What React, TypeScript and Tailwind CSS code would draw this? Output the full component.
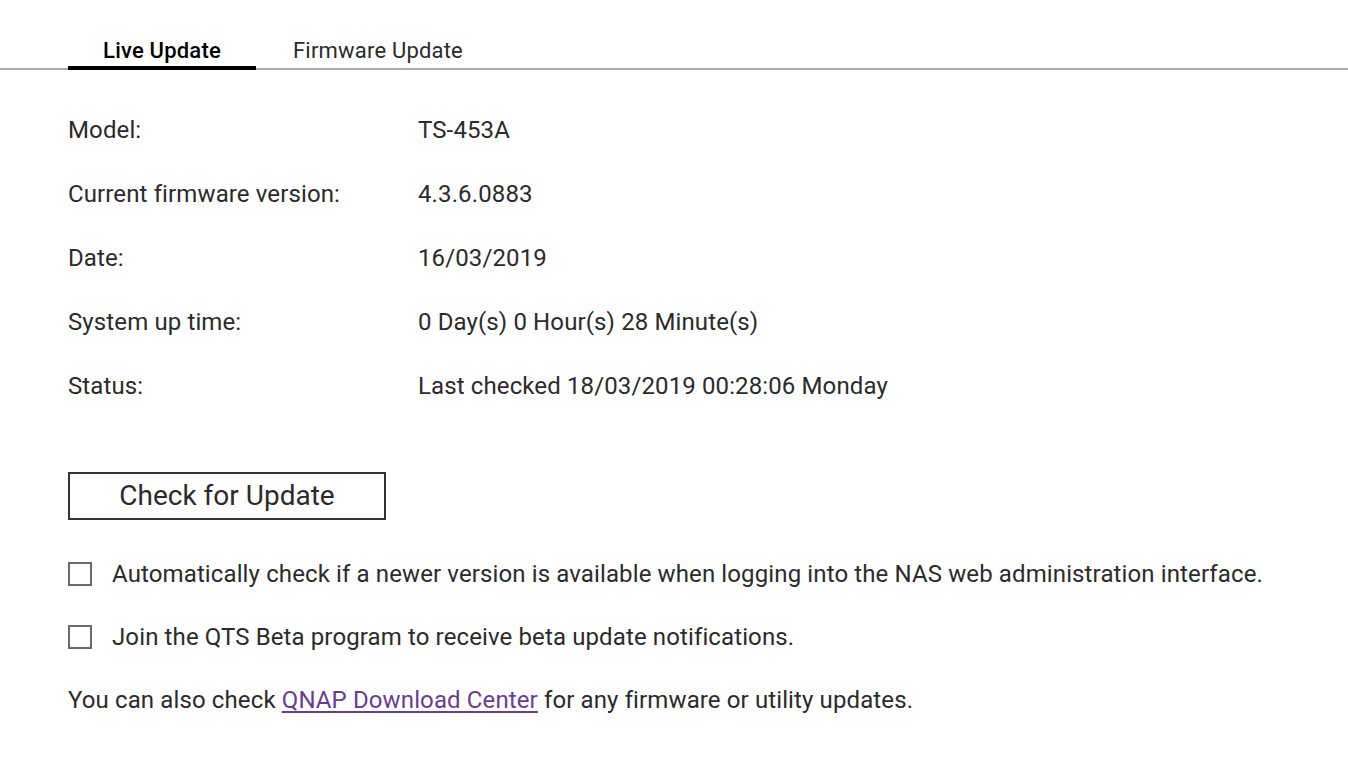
export default function App() {
  const rows: [string, string][] = [
    ['Model:', 'TS-453A'],
    ['Current firmware version:', '4.3.6.0883'],
    ['Date:', '16/03/2019'],
    ['System up time:', '0 Day(s) 0 Hour(s) 28 Minute(s)'],
    ['Status:', 'Last checked 18/03/2019 00:28:06 Monday'],
  ];

  return (
    <div className="w-[1348px] h-[776px] bg-white text-[#2b2b2b] font-['Roboto',sans-serif] overflow-hidden">
      {/* Tabs */}
      <div className="pt-[36px] border-b-2 border-[#aaaaaa] flex pl-[68px]">
        <div className="w-[188px] flex justify-center border-b-4 border-black -mb-[2px] text-[22px] tracking-[0.2px] leading-[30px] font-medium text-black">
          Live Update
        </div>
        <div className="pl-[37px] text-[22px] tracking-[0.2px] leading-[30px] text-[#2b2b2b]">Firmware Update</div>
      </div>

      {/* Info rows */}
      <div className="pl-[68px] pt-[46px] flex flex-col gap-[36px] text-[24px] tracking-[0.12px] leading-[28px]">
        {rows.map(([k, v]) => (
          <div key={k} className="flex">
            <div className="w-[350px]">{k}</div>
            <div>{v}</div>
          </div>
        ))}
      </div>

      <div className="pl-[68px] pt-[72px]">
        <button className="w-[318px] h-[48px] border-2 border-[#333333] text-[28px] leading-[32px] text-[#2b2b2b]">
          Check for Update
        </button>
      </div>

      <div className="pl-[68px] pt-[40px] flex flex-col gap-[35px] text-[24px] tracking-[0.12px] leading-[28px]">
        {[
          'Automatically check if a newer version is available when logging into the NAS web administration interface.',
          'Join the QTS Beta program to receive beta update notifications.',
        ].map((t) => (
          <label key={t} className="flex items-center gap-[20px]">
            <span className="w-[24px] h-[24px] border-2 border-[#6b6b6b] bg-white shrink-0" />
            <span>{t}</span>
          </label>
        ))}
        <div>
          You can also check{' '}
          <a className="text-[#6a3d8f] underline underline-offset-[3px]" href="#">
            QNAP Download Center
          </a>{' '}
          for any firmware or utility updates.
        </div>
      </div>
    </div>
  );
}
